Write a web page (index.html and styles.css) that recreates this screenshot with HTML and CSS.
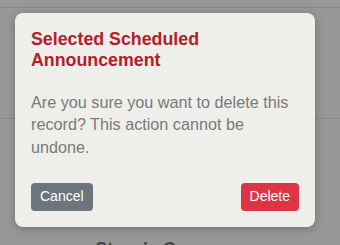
FILE: index.html
```html
<!DOCTYPE html>
<html lang="en">
<head>
    <meta charset="UTF-8">
    <meta name="viewport" content="width=device-width, initial-scale=1.0">
    <title>Delete Announcement</title>
    <link rel="stylesheet" href="styles.css">
</head>
<body>
    <div class="page">
        <div class="topbar"></div>
        <div class="section"></div>
        <h2 class="company">Steve's Company</h2>
    </div>

    <div class="backdrop">
        <div class="modal">
            <h3 class="modal-title">Selected Scheduled Announcement</h3>
            <p class="modal-body">Are you sure you want to delete this record? This action cannot be undone.</p>
            <div class="modal-footer">
                <button class="btn btn-secondary">Cancel</button>
                <button class="btn btn-danger">Delete</button>
            </div>
        </div>
    </div>
</body>
</html>
```

FILE: styles.css
```css
body {
    margin: 0;
    font-family: "Liberation Sans", Arial, sans-serif;
    background-color: #979797;
    overflow: hidden;
}
.page {
    height: 245px;
}
.topbar {
    height: 7px;
    border-bottom: 1px solid #868686;
}
.section {
    height: 110px;
    border-bottom: 1px solid #888888;
}
.company {
    margin: 0;
    padding-top: 120px;
    text-align: center;
    font-size: 18px;
    color: #454545;
}
.backdrop {
    position: absolute;
    top: 0;
    left: 0;
    width: 100%;
    height: 100%;
}
.modal {
    position: absolute;
    top: 13px;
    left: 15px;
    width: 300px;
    box-sizing: border-box;
    padding: 16px;
    background-color: #eeeeea;
    border-radius: 8px;
    box-shadow: 0 2px 8px rgba(0,0,0,0.25);
}
.modal-title {
    margin: 0 0 20px 0;
    font-size: 17.8px;
    line-height: 21px;
    font-weight: bold;
    color: #b3202a;
}
.modal-body {
    margin: 0;
    font-size: 16.2px;
    line-height: 22.4px;
    color: #7a7a78;
}
.modal-footer {
    display: flex;
    justify-content: space-between;
    margin-top: 25px;
}
.btn {
    padding: 4px 9px;
    font-family: inherit;
    font-size: 14px;
    line-height: 19.6px;
    color: white;
    border: none;
    border-radius: 4px;
    cursor: pointer;
}
.btn-secondary {
    background-color: #6c757d;
}
.btn-danger {
    background-color: #dc3545;
}
```
